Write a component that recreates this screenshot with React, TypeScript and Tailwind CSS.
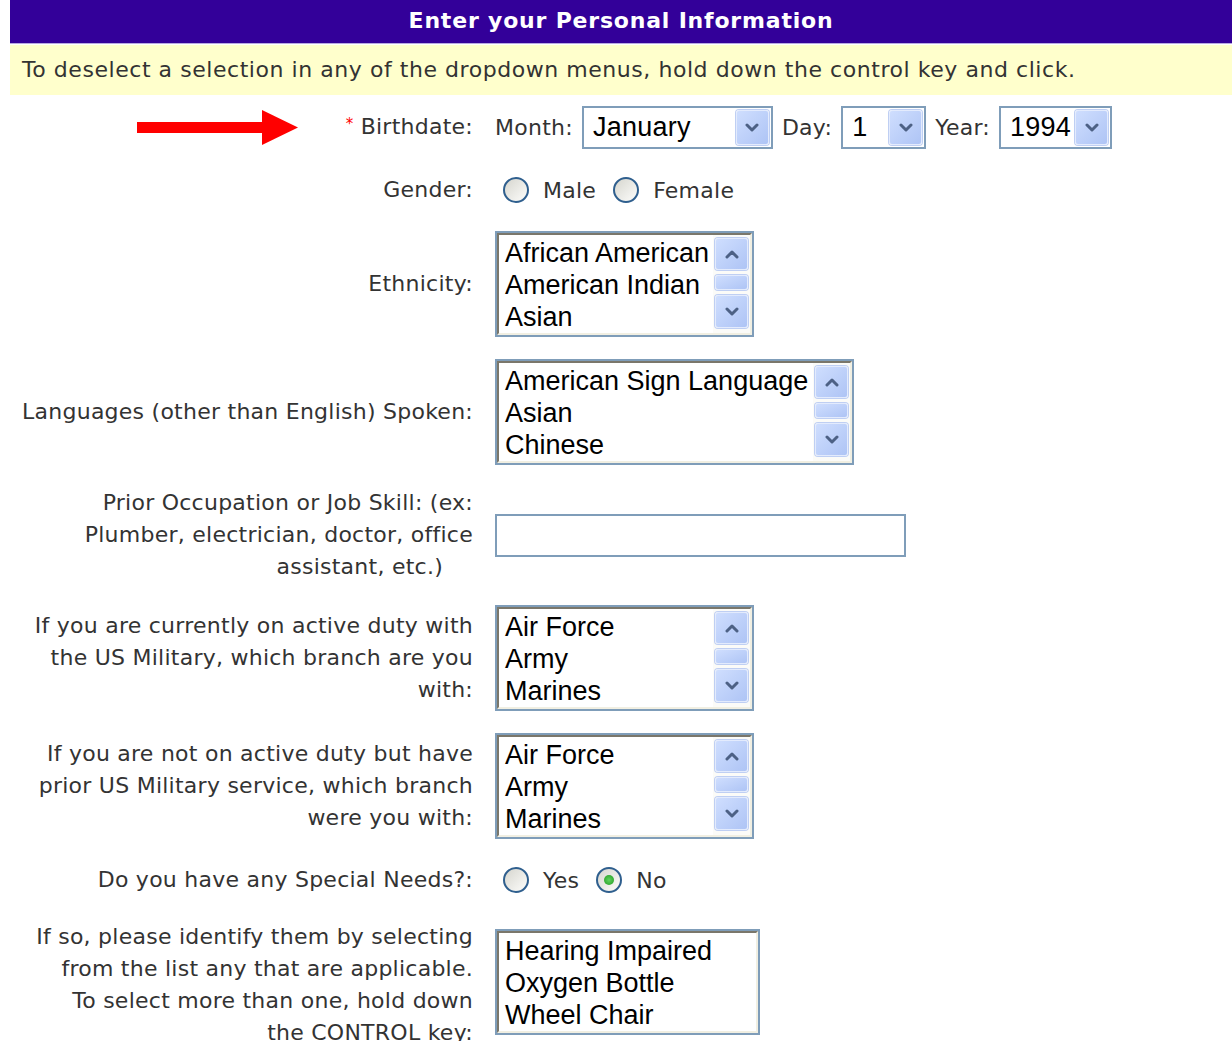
import React from 'react';

const labelFont = "font-['DejaVu_Sans',Verdana,sans-serif] text-[22px] tracking-[0.25px] text-[#333333]";
const fieldFont = "font-['Liberation_Sans',Arial,sans-serif] text-[27px] text-black";

// little chevron used on the dropdown and scroll buttons
const Chevron = ({ up = false }: { up?: boolean }) => (
  <svg width="14" height="9" viewBox="0 0 14 9" className={up ? 'rotate-180' : ''}>
    <path d="M2 2 L7 7 L12 2" fill="none" stroke="#4d6185" strokeWidth="3" strokeLinecap="round" strokeLinejoin="round" />
  </svg>
);

const XpButton = ({ className, children }: { className: string; children?: React.ReactNode }) => (
  <div
    className={`flex items-center justify-center rounded-[3px] border border-[#e3ebfd] bg-linear-to-br from-[#cfdefe] to-[#aec4f5] shadow-[0_0_0_1px_#bfcff3] ${className}`}
  >
    {children}
  </div>
);

const Dropdown = ({ value, width }: { value: string; width: string }) => (
  <div className={`flex h-[43px] items-center border-2 border-[#7f9db9] bg-white ${width}`}>
    <span className={`flex-1 pl-[9px] leading-none ${fieldFont}`}>{value}</span>
    <XpButton className="mr-[2px] h-[35px] w-[33px]">
      <Chevron />
    </XpButton>
  </div>
);

const ListBox = ({ items, width, scroll = true }: { items: string[]; width: string; scroll?: boolean }) => (
  <div className={`h-[106px] border-2 border-[#7f9db9] ${width}`}>
    <div className="flex h-full border-2 border-t-[#7a776b] border-l-[#7a776b] border-b-[#f1efe2] border-r-[#f1efe2] bg-white">
      <div className={`flex-1 pl-[6px] pt-[2px] leading-[32px] ${fieldFont}`}>
        {items.map((it) => (
          <div key={it} className="whitespace-nowrap">
            {it}
          </div>
        ))}
      </div>
      {scroll && (
        <div className="flex w-[37px] flex-col items-center bg-[#fbfbf8] pt-[3px]">
          <XpButton className="h-[32px] w-[33px]">
            <Chevron up />
          </XpButton>
          <XpButton className="mt-[5px] h-[15px] w-[33px]" />
          <XpButton className="mt-[5px] h-[33px] w-[33px]">
            <Chevron />
          </XpButton>
        </div>
      )}
    </div>
  </div>
);

const Radio = ({ checked = false }: { checked?: boolean }) => (
  <span className="flex h-[26px] w-[26px] items-center justify-center rounded-full border-2 border-[#2f5f8e] bg-linear-to-br from-[#d6d6cf] to-[#fdfdfb]">
    {checked && <span className="h-[10px] w-[10px] rounded-full bg-radial from-[#5fd35f] to-[#1a9a1a]" />}
  </span>
);

const RadioGroup = ({ options, selected }: { options: string[]; selected?: string }) => (
  <div className={`flex items-center pl-[8px] ${labelFont}`}>
    {options.map((o, i) => (
      <label key={o} className={`flex items-center ${i > 0 ? 'ml-[17px]' : ''}`}>
        <Radio checked={o === selected} />
        <span className="ml-[14px]">{o}</span>
      </label>
    ))}
  </div>
);

const Label = ({ lines }: { lines: React.ReactNode[] }) => (
  <div className={`flex flex-col items-end justify-center leading-[32px] ${labelFont}`}>
    {lines.map((l, i) => (
      <span key={i} className="whitespace-nowrap">
        {l}
      </span>
    ))}
  </div>
);

const branches = ['Air Force', 'Army', 'Marines'];

export default function App() {
  return (
    <div className="relative h-[1041px] w-[1232px] overflow-hidden bg-white">
      <div className="ml-[10px]">
        <div className="h-[44px] border-b border-[#b9aadf] bg-[#330099] text-center font-['DejaVu_Sans',Verdana,sans-serif] text-[22px] font-bold leading-[42px] tracking-[0.8px] text-white">
          Enter your Personal Information
        </div>
        <div className="mt-[1px] h-[50px] bg-[#ffffcc] pl-[12px] font-['DejaVu_Sans',Verdana,sans-serif] text-[22px] leading-[50px] tracking-[0.55px] text-[#333333]">
          To deselect a selection in any of the dropdown menus, hold down the control key and click.
        </div>

        <div className="grid grid-cols-[463px_1fr] gap-x-[22px] gap-y-[22px] pt-[11px]">
          <Label
            lines={[
              <>
                <span className="relative -top-[5px] text-[15px] text-[#ff0000]">*</span> Birthdate:
              </>,
            ]}
          />
          <div className={`flex items-center gap-[9px] ${labelFont}`}>
            <span>Month:</span>
            <Dropdown value="January" width="w-[191px]" />
            <span>Day:</span>
            <Dropdown value="1" width="w-[85px]" />
            <span>Year:</span>
            <Dropdown value="1994" width="w-[113px]" />
          </div>

          <Label lines={['Gender:']} />
          <div className="flex h-[38px] items-center">
            <RadioGroup options={['Male', 'Female']} />
          </div>

          <Label lines={['Ethnicity:']} />
          <ListBox items={['African American', 'American Indian', 'Asian']} width="w-[259px]" />

          <Label lines={['Languages (other than English) Spoken:']} />
          <ListBox items={['American Sign Language', 'Asian', 'Chinese']} width="w-[359px]" />

          <Label
            lines={[
              'Prior Occupation or Job Skill: (ex:',
              'Plumber, electrician, doctor, office',
              <>
                assistant, etc.)<span className="inline-block w-[30px]" />
              </>,
            ]}
          />
          <div className="flex items-center">
            <div className="h-[43px] w-[411px] border-2 border-[#7f9db9] bg-white" />
          </div>

          <Label
            lines={['If you are currently on active duty with', 'the US Military, which branch are you', 'with:']}
          />
          <ListBox items={branches} width="w-[259px]" />

          <Label
            lines={['If you are not on active duty but have', 'prior US Military service, which branch', 'were you with:']}
          />
          <ListBox items={branches} width="w-[259px]" />

          <Label lines={['Do you have any Special Needs?:']} />
          <div className="flex h-[38px] items-center">
            <RadioGroup options={['Yes', 'No']} selected="No" />
          </div>

          <Label
            lines={[
              'If so, please identify them by selecting',
              'from the list any that are applicable.',
              'To select more than one, hold down',
              'the CONTROL key:',
            ]}
          />
          <div className="pt-[8px]">
            <ListBox items={['Hearing Impaired', 'Oxygen Bottle', 'Wheel Chair']} width="w-[265px]" scroll={false} />
          </div>
        </div>
      </div>

      {/* red pointer next to the birthdate field */}
      <svg className="absolute left-[137px] top-[110px]" width="162" height="36" viewBox="0 0 162 36">
        <rect x="0" y="12" width="126" height="11" fill="#ff0000" />
        <polygon points="125,0 161,17.5 125,35" fill="#ff0000" />
      </svg>
    </div>
  );
}
